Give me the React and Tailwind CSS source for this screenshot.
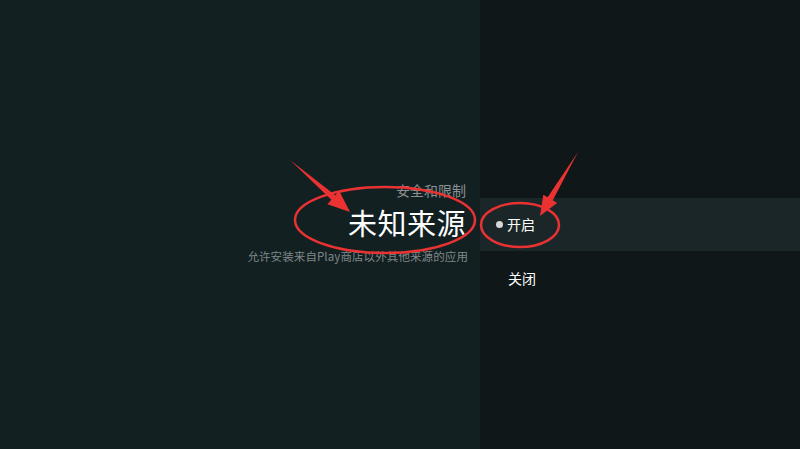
export default function App() {
  return (
    <div className="relative w-[800px] h-[449px] overflow-hidden bg-[#132022] font-['Noto_Sans_CJK_SC','Noto_Sans',sans-serif] flex">
      {/* Left: title column */}
      <div className="w-[480px] h-full flex flex-col items-end pt-[180px] pr-[14px]">
        <div className="text-[14px] leading-[20px] text-[#8a9293]">安全和限制</div>
        <div className="text-[29px] leading-[40px] text-white mt-[2px] tracking-[0.5px]">未知来源</div>
        <div className="text-[11.5px] leading-[16px] text-[#7f8788] mr-[-2px] mt-[6px] tracking-[0.1px]">允许安装来自Play商店以外其他来源的应用</div>
      </div>

      {/* Right: options */}
      <div className="flex-1 h-full bg-[#0f1718] pt-[198px]">
        <div className="h-[53px] bg-[#1a2627] flex items-center pl-[16px] gap-[4px] text-white text-[14px]">
          <span className="w-[7px] h-[7px] rounded-full bg-[#d5d8d8]" />
          <span>开启</span>
        </div>
        <div className="h-[55px] flex items-center pl-[28px] text-white text-[14px]">关闭</div>
      </div>

      {/* Annotations */}
      <svg className="absolute inset-0 pointer-events-none" width="800" height="449" viewBox="0 0 800 449">
        <ellipse cx="385" cy="220" rx="90" ry="33" fill="none" stroke="#ea3232" strokeWidth="2.5" />
        <ellipse cx="520" cy="225" rx="39" ry="22" fill="none" stroke="#ea3232" strokeWidth="2.5" />
        <polygon fill="#ea3232" points="290,160 335.3,195.2 339.2,190.7 350,212 327.4,204.3 331.3,199.8" />
        <polygon fill="#ea3232" points="578,152 552.8,200.3 557.1,202.9 540,216 543.3,194.7 547.6,197.3" />
      </svg>
    </div>
  );
}
